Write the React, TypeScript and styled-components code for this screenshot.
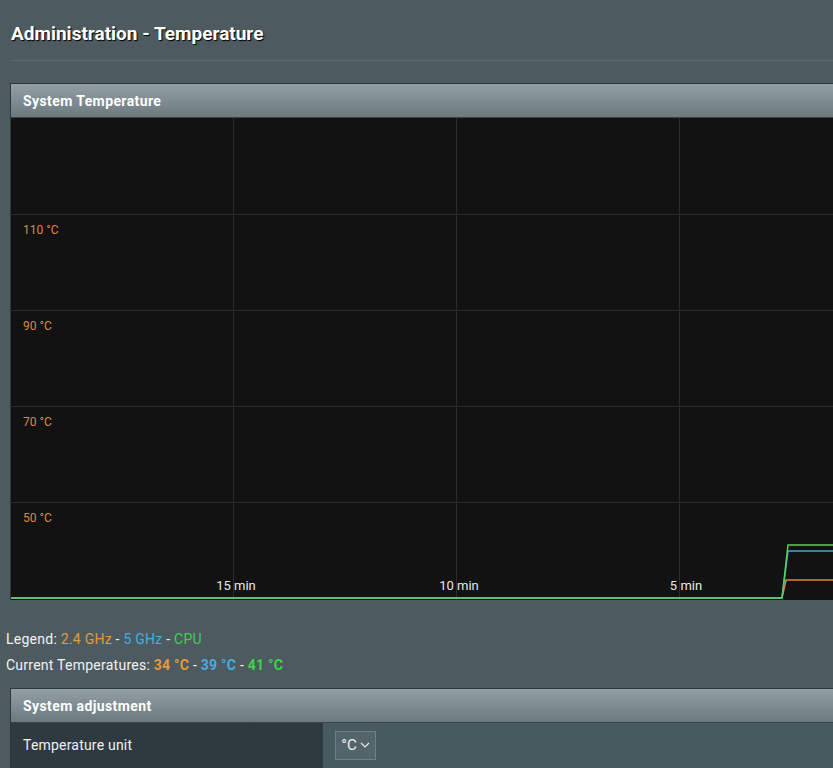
import React from "react";
import styled, { createGlobalStyle } from "styled-components";

const Global = createGlobalStyle`
  html, body { margin: 0; padding: 0; background: #4d5a5f; overflow: hidden; }
  body { font-family: Roboto, "Liberation Sans", sans-serif; color: #fff; }
`;

const Page = styled.div`
  width: 833px;
  height: 768px;
  overflow: hidden;
  display: flex;
  flex-direction: column;
`;

const Title = styled.h1`
  margin: 23px 0 0 11px;
  font-size: 19px;
  line-height: 22px;
  font-weight: 700;
  color: #fff;
  text-shadow: 1px 1px 1px #000;
`;

const Rule = styled.div`
  margin: 15px 0 0 12px;
  height: 1px;
  background: #3a4448;
  border-bottom: 1px solid #5d6b70;
`;

const Table = styled.section<{ $top: number }>`
  margin: ${(p) => p.$top}px 0 0 10px;
  border-top: 1px solid #2e373a;
  border-left: 1px solid #2e373a;
  display: flex;
  flex-direction: column;
`;

const TableHead = styled.div`
  height: 33px;
  display: flex;
  align-items: center;
  padding-left: 12px;
  font-size: 14px;
  letter-spacing: 0.4px;
  font-weight: 700;
  color: #fff;
  background: linear-gradient(#929fa4, #6c7a80);
  border-bottom: 1px solid #3a4448;
`;

const ChartBox = styled.div`
  height: 482px;
  background: #121212;
`;

const Info = styled.div`
  margin: 30px 0 0 6px;
  display: flex;
  flex-direction: column;
  gap: 8px;
  font-size: 14px;
  line-height: 18px;
  letter-spacing: 0.25px;
  color: #f2f2f2;
`;

const Line = styled.div``;

const Tone = styled.span<{ $c: string; $bold?: boolean }>`
  color: ${(p) => p.$c};
  font-weight: ${(p) => (p.$bold ? 700 : 400)};
`;

const Row = styled.div`
  display: grid;
  grid-template-columns: 312px 1fr;
  height: 46px;
`;

const LabelCell = styled.div`
  background: #2e3a3f;
  display: flex;
  align-items: center;
  padding: 0 0 2px 12px;
  font-size: 14px;
  letter-spacing: 0.2px;
  color: #eef1f2;
`;

const ValueCell = styled.div`
  background: #475a5f;
  display: flex;
  align-items: center;
  padding: 0 0 2px 12px;
`;

const Select = styled.div`
  width: 39px;
  height: 27px;
  border: 1px solid #6f8186;
  background: #53656a;
  display: flex;
  align-items: center;
  justify-content: center;
  gap: 3px;
  font-size: 15px;
  color: #eef1f2;
`;

const ORANGE = "#e59a35";
const BLUE = "#45aee0";
const GREEN = "#3ed24c";

function Chart() {
  const w = 823;
  const h = 482;
  const vx = [222, 445, 668];
  const hy = [96, 192, 288, 384];
  const yLabels = ["110 °C", "90 °C", "70 °C", "50 °C"];
  const xLabels = [
    { t: "15 min", x: 225 },
    { t: "10 min", x: 448 },
    { t: "5 min", x: 675 },
  ];
  return (
    <svg width={w} height={h} style={{ display: "block" }}>
      {vx.map((x) => (
        <line key={x} x1={x + 0.5} x2={x + 0.5} y1={0} y2={h} stroke="#2c2c2c" strokeWidth={1} />
      ))}
      {hy.map((y) => (
        <line key={y} x1={0} x2={w} y1={y + 0.5} y2={y + 0.5} stroke="#2c2c2c" strokeWidth={1} />
      ))}
      {yLabels.map((t, i) => (
        <text key={t} x={12} y={hy[i] + 20} fontSize={12} fill="#d98a45" fontFamily="Roboto, sans-serif">
          {t}
        </text>
      ))}
      {xLabels.map((l) => (
        <text key={l.t} x={l.x} y={472} fontSize={13} fill="#e8e8e8" textAnchor="middle" fontFamily="Roboto, sans-serif">
          {l.t}
        </text>
      ))}
      <polyline points={`0,480 771,480 775,462 ${w},462`} fill="none" stroke="#d9893e" strokeWidth={1.5} />
      <polyline points={`0,480 771,480 777,433 ${w},433`} fill="none" stroke="#5a9fcf" strokeWidth={1.5} />
      <polyline points={`0,480 771,480 777,427 ${w},427`} fill="none" stroke="#55cf5d" strokeWidth={1.5} />
    </svg>
  );
}

function Chevron() {
  return (
    <svg width="10" height="6" viewBox="0 0 10 6">
      <path d="M1 1 L5 5 L9 1" fill="none" stroke="#e6ecee" strokeWidth="1.2" />
    </svg>
  );
}

export default function App() {
  return (
    <Page>
      <Global />
      <Title>Administration - Temperature</Title>
      <Rule />
      <Table $top={22}>
        <TableHead>System Temperature</TableHead>
        <ChartBox>
          <Chart />
        </ChartBox>
      </Table>
      <Info>
        <Line>
          Legend: <Tone $c={ORANGE}>2.4 GHz</Tone> - <Tone $c={BLUE}>5 GHz</Tone> -{" "}
          <Tone $c={GREEN}>CPU</Tone>
        </Line>
        <Line>
          Current Temperatures: <Tone $c={ORANGE} $bold>34 °C</Tone> -{" "}
          <Tone $c={BLUE} $bold>39 °C</Tone> - <Tone $c={GREEN} $bold>41 °C</Tone>
        </Line>
      </Info>
      <Table $top={14}>
        <TableHead>System adjustment</TableHead>
        <Row>
          <LabelCell>Temperature unit</LabelCell>
          <ValueCell>
            <Select>
              °C <Chevron />
            </Select>
          </ValueCell>
        </Row>
      </Table>
    </Page>
  );
}
